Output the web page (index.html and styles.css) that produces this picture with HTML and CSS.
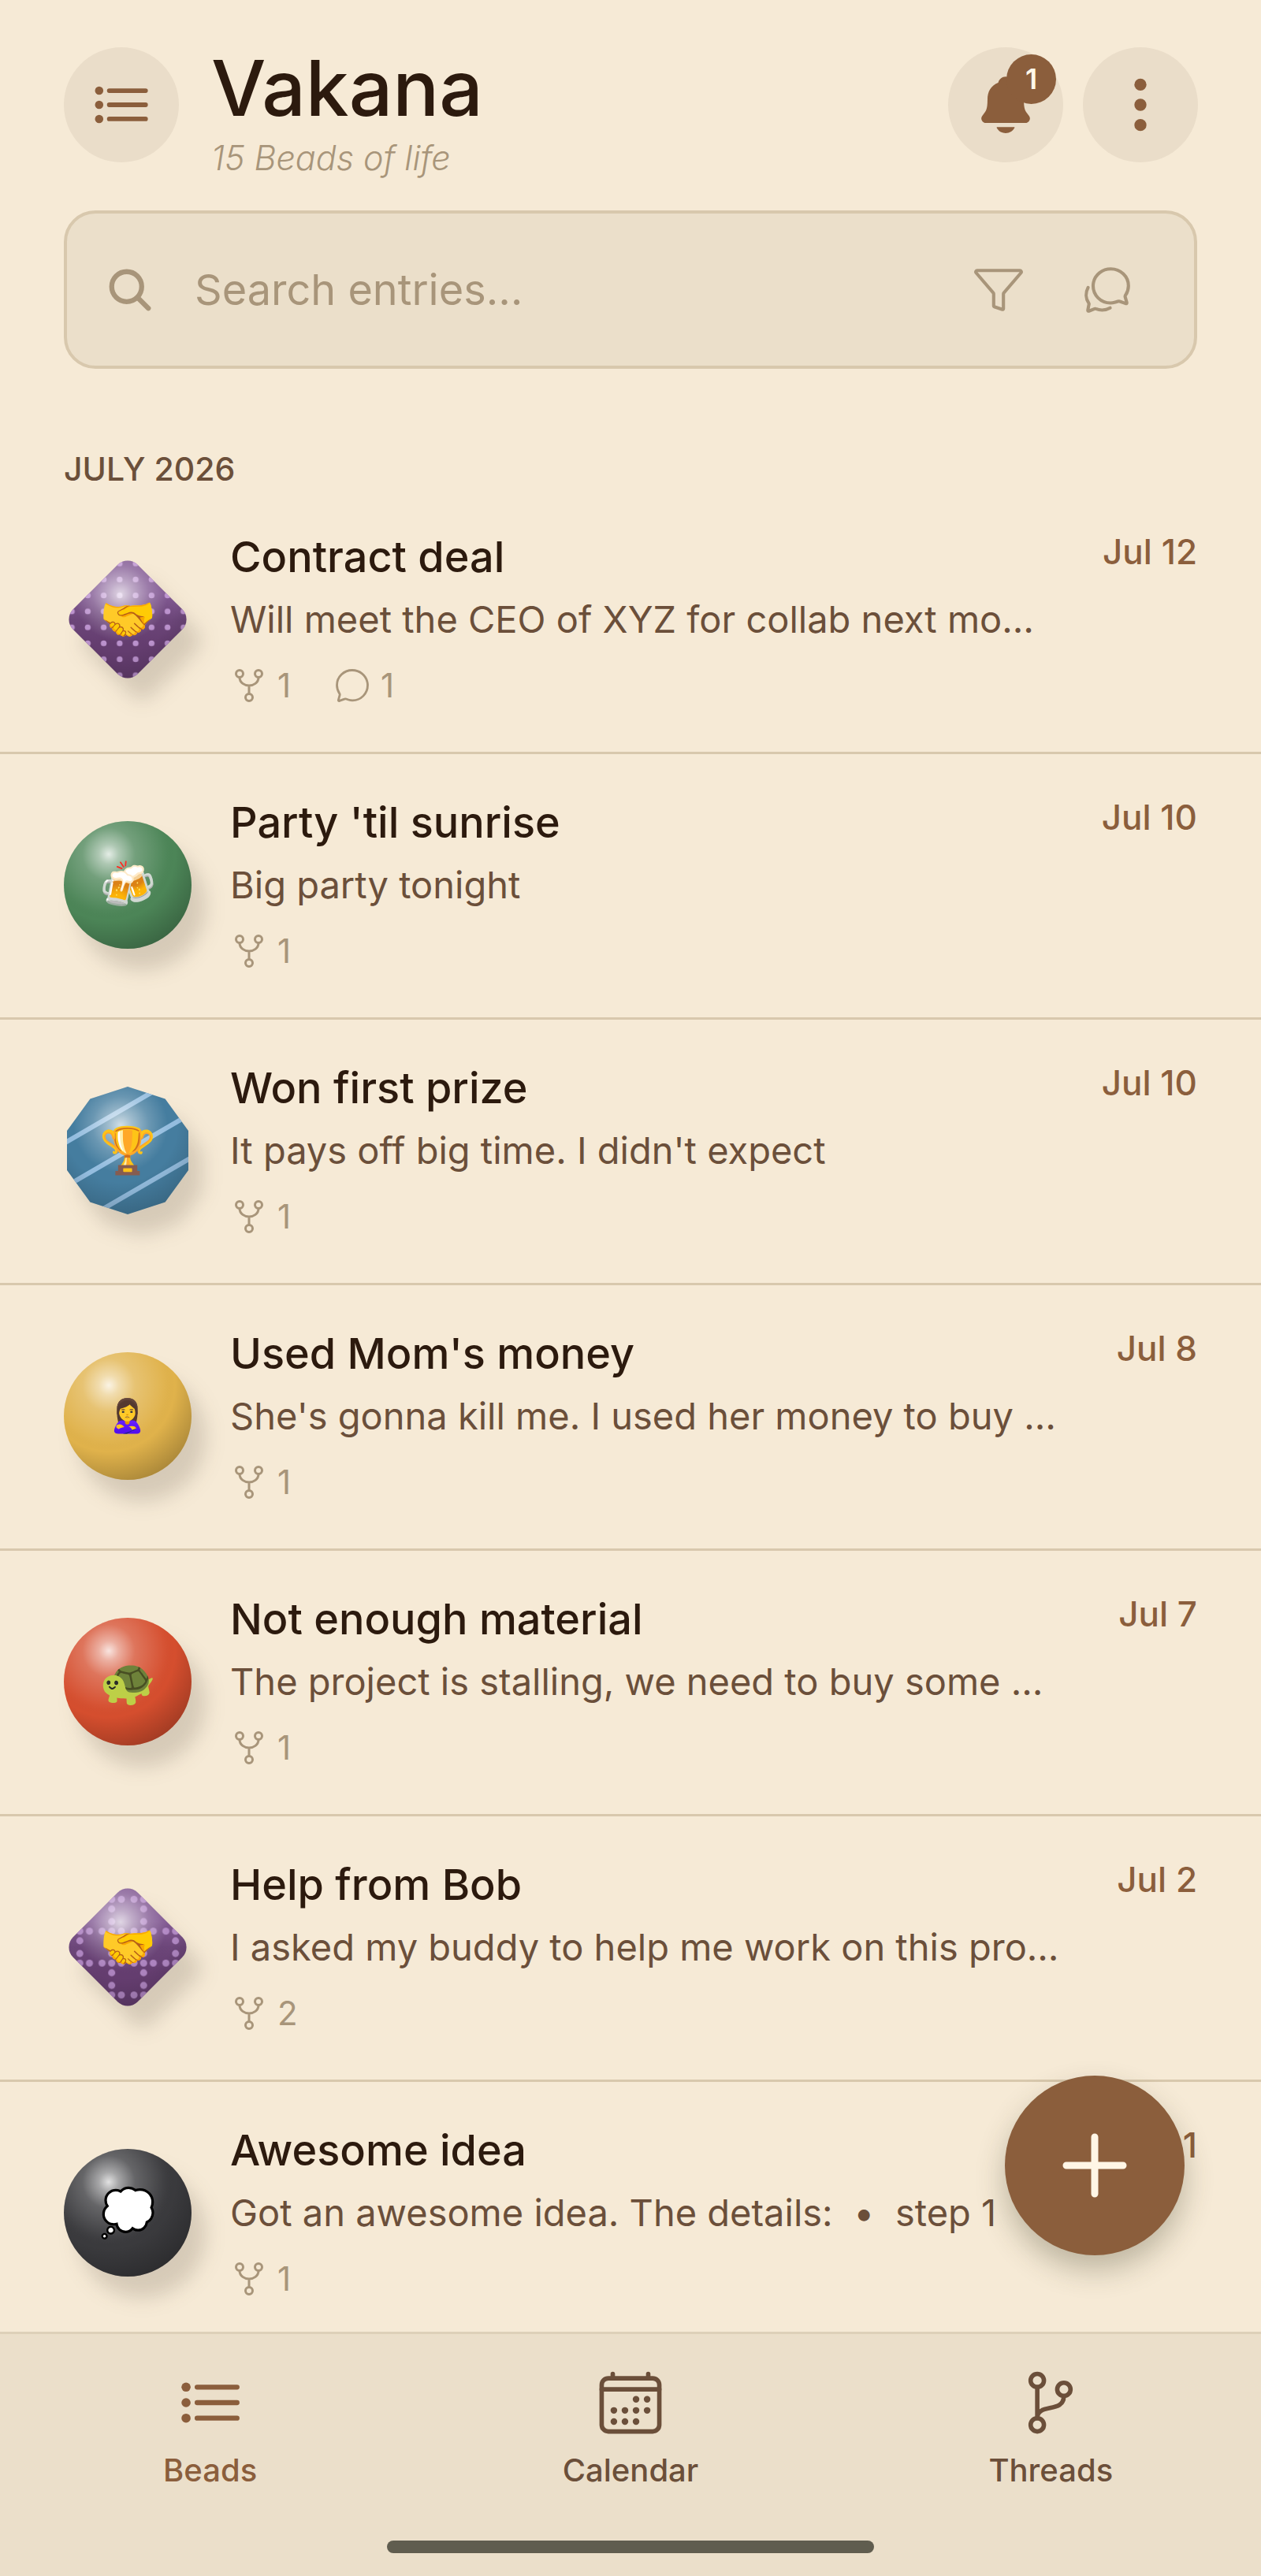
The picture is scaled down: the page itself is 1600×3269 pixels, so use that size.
FILE: index.html
```html
<!DOCTYPE html>
<html lang="en">
<head>
    <meta charset="utf-8">
    <title>Vakana</title>
    <link rel="stylesheet" href="styles.css">
</head>
<body>
  <!-- shared gradients, patterns and icons -->
  <svg class="defs" aria-hidden="true">
    <defs>
      <radialGradient id="shine" gradientUnits="userSpaceOnUse" cx="57" cy="42" r="140">
        <stop offset="0" stop-color="#fff" stop-opacity="0.85"/>
        <stop offset="0.09" stop-color="#fff" stop-opacity="0.55"/>
        <stop offset="0.24" stop-color="#fff" stop-opacity="0.22"/>
        <stop offset="0.5" stop-color="#fff" stop-opacity="0.03"/>
        <stop offset="0.6" stop-color="#000" stop-opacity="0"/>
        <stop offset="1" stop-color="#000" stop-opacity="0.3"/>
      </radialGradient>
      <radialGradient id="shine2" gradientUnits="userSpaceOnUse" cx="72" cy="49" r="120">
        <stop offset="0" stop-color="#fff" stop-opacity="0.75"/>
        <stop offset="0.12" stop-color="#fff" stop-opacity="0.5"/>
        <stop offset="0.3" stop-color="#fff" stop-opacity="0.2"/>
        <stop offset="0.5" stop-color="#fff" stop-opacity="0"/>
        <stop offset="0.6" stop-color="#000" stop-opacity="0"/>
        <stop offset="1" stop-color="#000" stop-opacity="0.2"/>
      </radialGradient>
      <linearGradient id="purple" x1="0.3" y1="0.3" x2="0.7" y2="0.7">
        <stop offset="0" stop-color="#835b94"/>
        <stop offset="0.5" stop-color="#6c4679"/>
        <stop offset="1" stop-color="#643d6f"/>
      </linearGradient>
      <pattern id="dots" width="20.25" height="20.25" patternUnits="userSpaceOnUse">
        <circle cx="10.1" cy="10.1" r="3.7" fill="#c9a0dc" fill-opacity="0.85"/>
      </pattern>
      <pattern id="dotgrid" width="40.5" height="40.5" patternUnits="userSpaceOnUse">
        <g fill="#c49bd8" fill-opacity="0.75">
          <circle cx="20.25" cy="20.25" r="4.5"/>
          <circle cx="8" cy="20.25" r="4.5"/>
          <circle cx="32.5" cy="20.25" r="4.5"/>
          <circle cx="20.25" cy="8" r="4.5"/>
          <circle cx="20.25" cy="32.5" r="4.5"/>
        </g>
      </pattern>
      <clipPath id="decagon">
        <path d="M81 0l47.6 15.5L158 56v50l-29.4 40.5L81 162l-47.6-15.5L4 106V56l29.4-40.5z"/>
      </clipPath>
    </defs>
    <symbol id="icon-list" viewBox="0 0 512 512">
      <path d="M160 144h288M160 256h288M160 368h288" fill="none" stroke="currentColor" stroke-width="36" stroke-linecap="round"/>
      <circle cx="80" cy="144" r="33" fill="currentColor"/>
      <circle cx="80" cy="256" r="33" fill="currentColor"/>
      <circle cx="80" cy="368" r="33" fill="currentColor"/>
    </symbol>
    <symbol id="icon-fork" viewBox="0 0 512 512">
      <g fill="none" stroke="currentColor" stroke-width="32" stroke-linecap="round">
        <circle cx="128" cy="96" r="48"/>
        <circle cx="384" cy="96" r="48"/>
        <circle cx="256" cy="416" r="48"/>
        <path d="M256 256v112M128 144c0 74.67 68.92 112 128 112M384 144c0 74.67-68.92 112-128 112"/>
      </g>
    </symbol>
    <symbol id="icon-comment" viewBox="0 0 512 512">
      <path fill="none" stroke="currentColor" stroke-width="30" stroke-linejoin="round" d="M87.49 380c1.19-4.38-1.44-10.47-3.95-14.86a44.86 44.86 0 00-2.54-3.8 199.81 199.81 0 01-33-110C47.65 139.09 140.73 48 255.83 48 356.21 48 440 117.54 459.58 209.85a199 199 0 014.42 41.64c0 112.41-89.49 204.93-204.59 204.93-18.3 0-43-4.6-56.47-8.37s-26.92-8.77-30.39-10.11a31.09 31.09 0 00-11.12-2.07 30.71 30.71 0 00-12.09 2.43l-67.83 24.48a16 16 0 01-4.67 1.22 9.6 9.6 0 01-9.57-9.74 15.85 15.85 0 01.6-3.29z"/>
    </symbol>
  </svg>

  <header class="header">
    <button class="round-button" aria-label="Menu"><svg class="icon"><use href="#icon-list"/></svg></button>
    <div class="brand">
      <h1>Vakana</h1>
      <p>15 Beads of life</p>
    </div>
    <button class="round-button" aria-label="Notifications">
      <svg class="icon" viewBox="0 0 512 512"><path fill="currentColor" d="M440.08 341.31c-1.66-2-3.29-4-4.89-5.93-22-26.61-35.31-42.67-35.31-118 0-39-9.33-71-27.72-95-13.56-17.73-31.89-31.18-56.05-41.12a3 3 0 01-.82-.67C306.6 51.49 282.82 32 256 32s-50.59 19.49-59.28 48.56a3.13 3.13 0 01-.81.65c-56.38 23.21-83.78 67.74-83.78 136.14 0 75.36-13.29 91.42-35.31 118-1.6 1.93-3.23 3.89-4.89 5.93a35.16 35.16 0 00-4.65 37.62c6.17 13 19.32 21.07 34.33 21.07H410.5c14.94 0 28-8.06 34.19-21a35.17 35.17 0 00-4.61-37.66zM256 480a80.06 80.06 0 0070.44-42.13 4 4 0 00-3.54-5.87H189.12a4 4 0 00-3.55 5.87A80.06 80.06 0 00256 480z"/></svg>
      <span class="badge">1</span>
    </button>
    <button class="round-button" aria-label="More">
      <svg class="icon" viewBox="0 0 512 512" fill="currentColor"><circle cx="256" cy="96" r="48"/><circle cx="256" cy="256" r="48"/><circle cx="256" cy="416" r="48"/></svg>
    </button>
  </header>

  <div class="search">
    <svg class="search-icon" viewBox="0 0 512 512" fill="none" stroke="currentColor" stroke-width="52" stroke-linecap="round"><circle cx="221" cy="221" r="157"/><path d="M338 338l110 110"/></svg>
    <input type="text" placeholder="Search entries…" aria-label="Search entries">
    <button class="search-button" aria-label="Filter">
      <svg viewBox="0 0 512 512" fill="none" stroke="currentColor" stroke-width="32" stroke-linejoin="round"><path d="M35.4 87.12l168.65 196.44A16.07 16.07 0 01208 294v119.32a7.93 7.93 0 005.39 7.59l80.15 26.67A7.94 7.94 0 00304 440V294a16.07 16.07 0 014-10.44L476.6 87.12A14 14 0 00466 64H46.05A14 14 0 0035.4 87.12z"/></svg>
    </button>
    <button class="search-button" aria-label="Comments">
      <svg viewBox="0 0 512 512" fill="none" stroke="currentColor" stroke-width="32" stroke-linecap="round" stroke-linejoin="round"><path d="M431 320.6c-1-3.6 1.2-8.6 3.3-12.2a33.68 33.68 0 012.1-3.1A162 162 0 00464 215c.3-92.2-77.5-167-173.7-167-83.9 0-153.9 57.1-170.3 132.9a160.7 160.7 0 00-3.7 34.2c0 92.3 74.8 169.1 171 169.1 15.3 0 35.9-4.6 47.2-7.7s22.5-7.2 25.4-8.3a26.44 26.44 0 019.3-1.7 26 26 0 0110.1 2l56.7 20.1a13.52 13.52 0 003.9 1 8 8 0 008-8 12.85 12.85 0 00-.5-2.7z"/><path d="M66.46 232a146.23 146.23 0 006.39 152.67c2.31 3.49 3.61 6.19 3.21 8s-11.93 61.87-11.93 61.87a8 8 0 002.71 7.68A8.17 8.17 0 0072 464a7.26 7.26 0 002.91-.6l56.21-22a15.7 15.7 0 0112 .2c18.94 7.38 39.88 12 60.83 12A159.21 159.21 0 00284 432.11"/></svg>
    </button>
  </div>

  <main class="main">
    <div class="list">
      <h2 class="month">JULY 2026</h2>

      <article class="entry">
        <div class="bead">
          <svg viewBox="0 0 162 162">
            <g id="diamond-base">
              <rect x="23" y="23" width="116" height="116" rx="18" fill="url(#purple)" transform="rotate(45 81 81)"/>
            </g>
            <clipPath id="diamond"><rect x="23" y="23" width="116" height="116" rx="18" transform="rotate(45 81 81)"/></clipPath>
            <g clip-path="url(#diamond)"><rect width="162" height="162" fill="url(#dots)"/><rect width="162" height="162" fill="url(#shine2)"/></g>
          </svg>
          <span class="emoji">🤝</span>
        </div>
        <div class="entry-body">
          <h3>Contract deal</h3>
          <p>Will meet the CEO of XYZ for collab next mo…</p>
          <div class="meta">
            <span><svg><use href="#icon-fork"/></svg>1</span>
            <span><svg><use href="#icon-comment"/></svg>1</span>
          </div>
        </div>
        <time>Jul 12</time>
      </article>

      <article class="entry">
        <div class="bead">
          <svg viewBox="0 0 162 162"><circle cx="81" cy="81" r="81" fill="#4c8557"/><circle cx="81" cy="81" r="81" fill="url(#shine)"/></svg>
          <span class="emoji">🍻</span>
        </div>
        <div class="entry-body">
          <h3>Party 'til sunrise</h3>
          <p>Big party tonight</p>
          <div class="meta"><span><svg><use href="#icon-fork"/></svg>1</span></div>
        </div>
        <time>Jul 10</time>
      </article>

      <article class="entry">
        <div class="bead">
          <svg viewBox="0 0 162 162">
            <g clip-path="url(#decagon)">
              <rect width="162" height="162" fill="#457d9f"/>
              <path d="M-19 83l200-116M-19 139l200-116M-19 195l200-116" stroke="#a8cdef" stroke-opacity="0.8" stroke-width="6"/>
              <rect width="162" height="162" fill="url(#shine2)"/>
            </g>
          </svg>
          <span class="emoji">🏆</span>
        </div>
        <div class="entry-body">
          <h3>Won first prize</h3>
          <p>It pays off big time. I didn't expect</p>
          <div class="meta"><span><svg><use href="#icon-fork"/></svg>1</span></div>
        </div>
        <time>Jul 10</time>
      </article>

      <article class="entry">
        <div class="bead">
          <svg viewBox="0 0 162 162"><circle cx="81" cy="81" r="81" fill="#e0b24b"/><circle cx="81" cy="81" r="81" fill="url(#shine)"/></svg>
          <span class="emoji small">🙎‍♀️</span>
        </div>
        <div class="entry-body">
          <h3>Used Mom's money</h3>
          <p>She's gonna kill me. I used her money to buy …</p>
          <div class="meta"><span><svg><use href="#icon-fork"/></svg>1</span></div>
        </div>
        <time>Jul 8</time>
      </article>

      <article class="entry">
        <div class="bead">
          <svg viewBox="0 0 162 162"><circle cx="81" cy="81" r="81" fill="#d54e2e"/><circle cx="81" cy="81" r="81" fill="url(#shine)"/></svg>
          <span class="emoji">🐢</span>
        </div>
        <div class="entry-body">
          <h3>Not enough material</h3>
          <p>The project is stalling, we need to buy some …</p>
          <div class="meta"><span><svg><use href="#icon-fork"/></svg>1</span></div>
        </div>
        <time>Jul 7</time>
      </article>

      <article class="entry">
        <div class="bead">
          <svg viewBox="0 0 162 162">
            <use href="#diamond-base"/>
            <g clip-path="url(#diamond)"><rect width="162" height="162" fill="url(#dotgrid)"/><rect width="162" height="162" fill="url(#shine2)"/></g>
          </svg>
          <span class="emoji">🤝</span>
        </div>
        <div class="entry-body">
          <h3>Help from Bob</h3>
          <p>I asked my buddy to help me work on this pro…</p>
          <div class="meta"><span><svg><use href="#icon-fork"/></svg>2</span></div>
        </div>
        <time>Jul 2</time>
      </article>

      <article class="entry">
        <div class="bead">
          <svg viewBox="0 0 162 162"><circle cx="81" cy="81" r="81" fill="#3a3a3d"/><circle cx="81" cy="81" r="81" fill="url(#shine)"/></svg>
          <span class="emoji">💭</span>
        </div>
        <div class="entry-body">
          <h3>Awesome idea</h3>
          <p>Got an awesome idea. The details: &nbsp;•&nbsp; step 1</p>
          <div class="meta"><span><svg><use href="#icon-fork"/></svg>1</span></div>
        </div>
        <time>Jul 1</time>
      </article>
    </div>

    <button class="fab" aria-label="New bead">
      <svg viewBox="0 0 84 84" stroke="currentColor" stroke-width="9" stroke-linecap="round"><path d="M42 6v72M6 42h72"/></svg>
    </button>
  </main>

  <nav class="tabs">
    <div class="tab-row">
      <a class="tab active" href="#beads"><svg><use href="#icon-list"/></svg>Beads</a>
      <a class="tab" href="#calendar">
        <svg viewBox="0 0 512 512" fill="currentColor">
          <g fill="none" stroke="currentColor" stroke-width="32" stroke-linecap="round"><rect x="48" y="80" width="416" height="384" rx="48"/><path d="M128 48v32M384 48v32M464 160H48"/></g>
          <circle cx="296" cy="232" r="24"/><circle cx="376" cy="232" r="24"/>
          <circle cx="136" cy="312" r="24"/><circle cx="216" cy="312" r="24"/><circle cx="296" cy="312" r="24"/><circle cx="376" cy="312" r="24"/>
          <circle cx="136" cy="392" r="24"/><circle cx="216" cy="392" r="24"/><circle cx="296" cy="392" r="24"/>
        </svg>Calendar</a>
      <a class="tab" href="#threads">
        <svg viewBox="0 0 512 512" fill="none" stroke="currentColor" stroke-width="32" stroke-linecap="round"><circle cx="160" cy="96" r="48"/><circle cx="160" cy="416" r="48"/><circle cx="352" cy="160" r="48"/><path d="M160 368V144M352 208c0 128-192 48-192 160"/></svg>Threads</a>
    </div>
    <div class="home-bar"></div>
  </nav>
</body>
</html>
```
FILE: styles.css
```css
* {
    box-sizing: border-box;
}

body {
    display: flex;
    flex-direction: column;
    height: 100vh;
    margin: 0;
    background-color: #f6ead6;
    color: #2c1a0e;
    font-family: Inter, "Liberation Sans", sans-serif;
}

h1, h2, h3, p {
    margin: 0;
    font-weight: 500;
}

button {
    border: none;
    padding: 0;
    background: none;
    font-family: inherit;
}

svg {
    display: block;
}

.defs {
    position: absolute;
    width: 0;
    height: 0;
}

/* header */
.header {
    display: flex;
    align-items: flex-start;
    gap: 25px;
    padding: 60px 80px 0 81px;
}

.round-button {
    position: relative;
    display: flex;
    align-items: center;
    justify-content: center;
    width: 146px;
    height: 146px;
    border-radius: 50%;
    background-color: #eaddc9;
    color: #8b5e3c;
}

.icon {
    width: 82px;
    height: 82px;
}

.badge {
    position: absolute;
    top: 9px;
    right: 9px;
    width: 63px;
    height: 63px;
    border-radius: 50%;
    background-color: #8b5e3c;
    color: #fff8ea;
    font-size: 36px;
    line-height: 63px;
    font-weight: 600;
}

.brand {
    flex: 1;
    padding-left: 16px;
}

.brand h1 {
    font-size: 98px;
    line-height: 104px;
}

.brand p {
    margin-top: 6px;
    color: #a8957a;
    font-size: 43px;
    line-height: 60px;
    font-style: italic;
    font-weight: 300;
}

/* search */
.search {
    display: flex;
    align-items: center;
    height: 201px;
    margin: 37px 81px 0;
    padding: 0 77px 0 49px;
    border: 4px solid #d8c8ad;
    border-radius: 40px;
    background-color: #ebdfca;
    color: #a8957a;
}

.search-icon {
    width: 62px;
    height: 62px;
}

.search input {
    flex: 1;
    min-width: 0;
    padding: 0 51px;
    border: none;
    outline: none;
    background: none;
    color: #2c1a0e;
    font-family: inherit;
    font-size: 54px;
}

.search input::placeholder {
    color: #a8957a;
    opacity: 1;
}

.search-button {
    color: #a8957a;
}

.search-button svg {
    width: 66px;
    height: 66px;
}

.search-button + .search-button {
    margin-left: 72px;
}

/* list */
.main {
    position: relative;
    flex: 1;
    min-height: 0;
}

.list {
    height: 100%;
    overflow: hidden;
}

.month {
    padding: 104px 81px 2px;
    color: #6b4f3a;
    font-size: 41px;
    line-height: 46px;
}

.entry {
    display: flex;
    align-items: flex-start;
    padding: 50px 81px 60px;
    border-bottom: 3px solid #d8c8ad;
}

.bead {
    display: grid;
    place-items: center;
    width: 162px;
    height: 162px;
    margin: 35px 49px 0 0;
}

.bead svg, .emoji {
    grid-area: 1 / 1;
}

.bead svg {
    width: 162px;
    height: 162px;
    filter: drop-shadow(18px 27px 12px rgba(60, 50, 35, 0.17));
}

.emoji {
    z-index: 1;
    font-family: "Noto Color Emoji", sans-serif;
    font-size: 58px;
    line-height: 72px;
}

.emoji.small {
    font-size: 41px;
}

.entry-body {
    flex: 1;
    min-width: 0;
    white-space: nowrap;
}

.entry h3 {
    font-size: 54px;
    line-height: 74px;
}

.entry p {
    margin-top: 6px;
    color: #6b4f3a;
    font-size: 47px;
    line-height: 72px;
    font-weight: 400;
}

.meta {
    display: flex;
    gap: 54px;
    margin-top: 24px;
    color: #a8957a;
    font-size: 42px;
    line-height: 48px;
}

.meta span {
    display: flex;
    gap: 12px;
}

.meta svg {
    width: 48px;
    height: 48px;
}

.entry time {
    color: #8b5e3c;
    font-size: 44px;
    line-height: 60px;
    font-weight: 500;
}

.fab {
    position: absolute;
    right: 97px;
    bottom: 97px;
    display: flex;
    align-items: center;
    justify-content: center;
    width: 228px;
    height: 228px;
    border-radius: 50%;
    background-color: #8b5e3c;
    color: #fff6e6;
    box-shadow: 0 18px 36px rgba(60, 60, 35, 0.3);
}

.fab svg {
    width: 84px;
    height: 84px;
}

/* bottom tabs */
.tabs {
    padding: 42px 0 29px;
    border-top: 3px solid #ddd0b8;
    background-color: #ebdfca;
}

.tab-row {
    display: grid;
    grid-template-columns: repeat(3, 1fr);
}

.tab {
    display: flex;
    flex-direction: column;
    align-items: center;
    gap: 13px;
    color: #6b4f3a;
    font-size: 40px;
    line-height: 56px;
    font-weight: 500;
    text-decoration: none;
}

.tab.active {
    color: #8b5e3c;
}

.tab svg {
    width: 90px;
    height: 90px;
}

.home-bar {
    width: 618px;
    height: 16px;
    margin: 61px auto 0;
    border-radius: 8px;
    background-color: #605d4f;
}
```
